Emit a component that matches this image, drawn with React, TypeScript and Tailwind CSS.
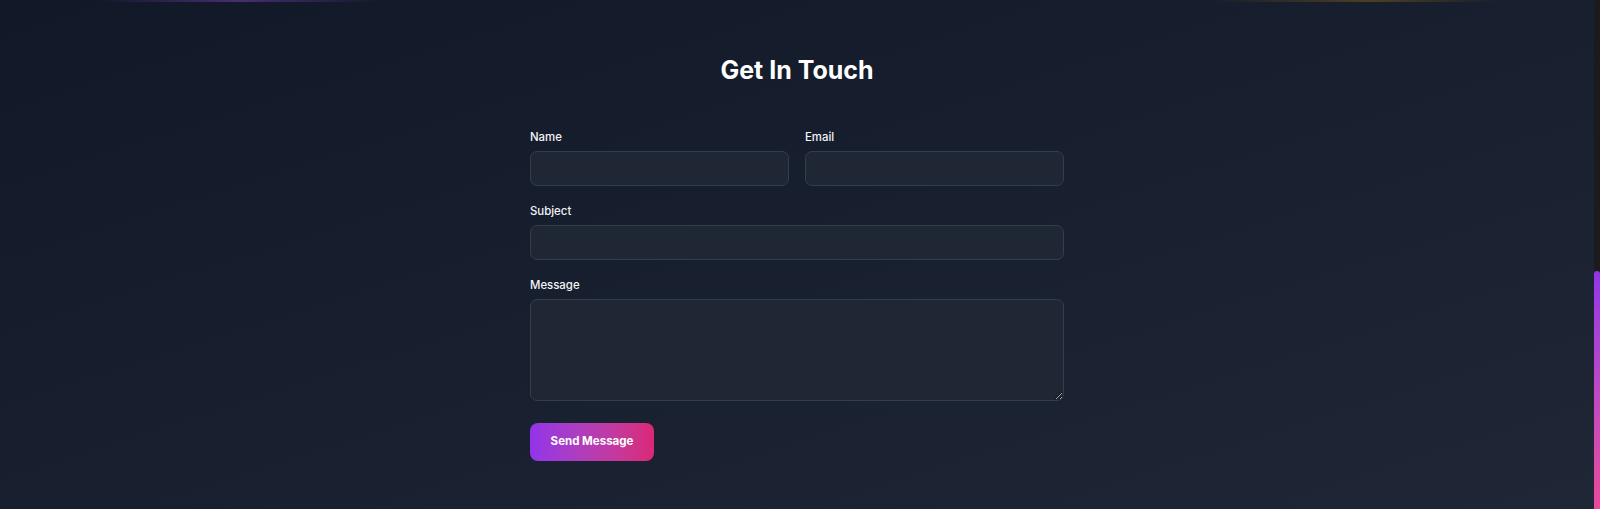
import React from 'react';

const inputCls =
  'block w-full h-[35px] rounded-[7px] border border-[#343d4c] bg-[#1f2735] px-3 text-[12px] text-gray-100 outline-none';

const Field: React.FC<{ label: string; children: React.ReactNode }> = ({ label, children }) => (
  <div>
    <label className="mb-[6px] block pt-[1px] text-[11.4px] font-medium leading-4 text-gray-100">{label}</label>
    {children}
  </div>
);

const App: React.FC = () => {
  return (
    <div className="flex h-[509px] w-full overflow-hidden font-['Inter',sans-serif]">
      <main className="flex flex-1 flex-col bg-gradient-to-br from-[#111827] to-[#1f2737]">
        {/* faint glow left over from the section above */}
        <div className="h-[2px] w-full bg-[linear-gradient(90deg,transparent_6%,rgba(168,85,247,0.35)_15%,transparent_24%,transparent_76%,rgba(202,138,4,0.3)_86%,transparent_94%)]" />

        <section className="flex flex-col items-center pt-[53px]">
          <h2 className="h-[30px] text-[25px] font-bold leading-[30px] text-white">Get In Touch</h2>

          <form className="mt-[43px] flex w-[534px] flex-col gap-4" onSubmit={(e) => e.preventDefault()}>
            <div className="grid grid-cols-2 gap-x-4">
              <Field label="Name">
                <input type="text" className={inputCls} />
              </Field>
              <Field label="Email">
                <input type="email" className={inputCls} />
              </Field>
            </div>

            <Field label="Subject">
              <input type="text" className={inputCls} />
            </Field>

            <Field label="Message">
              <textarea className="block h-[102px] w-full rounded-[7px] border border-[#343d4c] bg-[#1f2735] px-3 py-2 text-[12px] text-gray-100 outline-none" />
            </Field>

            <div className="pt-[6px]">
              <button
                type="submit"
                className="h-[38px] w-[124px] rounded-[8px] bg-gradient-to-r from-[#9333ea] to-[#db2777] text-[11.5px] font-bold text-white"
              >
                Send Message
              </button>
            </div>
          </form>
        </section>
      </main>

      {/* scrollbar */}
      <div className="flex w-[6px] flex-col justify-end bg-[#1b1b1d]">
        <div className="h-[238px] rounded-t-full bg-gradient-to-b from-[#9333ea] to-[#ec4899]" />
      </div>
    </div>
  );
};

export default App;
